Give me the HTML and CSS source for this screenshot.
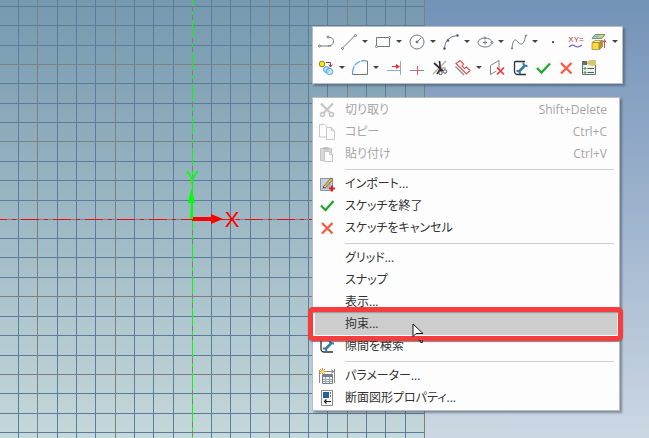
FILE: index.html
```html
<!DOCTYPE html>
<html lang="ja">
<head>
<meta charset="utf-8">
<title>スケッチ</title>
<link rel="stylesheet" href="styles.css">
</head>
<body>
<main class="workspace">
  <svg class="sketch" aria-hidden="true">
    <defs>
      <linearGradient id="sheet" x1="0" y1="0" x2="0" y2="1">
        <stop offset="0" stop-color="#7599af"/>
        <stop offset="1" stop-color="#c5d8da"/>
      </linearGradient>
    </defs>
    <rect width="424" height="100%" fill="url(#sheet)"/>
    <path class="minor" d="M18.5 0V2000M57.5 0V2000M76.5 0V2000M95.5 0V2000M134.5 0V2000M153.5 0V2000M173.5 0V2000M211.5 0V2000M230.5 0V2000M250.5 0V2000M289.5 0V2000M308.5 0V2000M327.5 0V2000M366.5 0V2000M385.5 0V2000M405.5 0V2000M0 6.500H424M0 25.500H424M0 45.500H424M0 83.500H424M0 103.500H424M0 122.500H424M0 161.500H424M0 180.500H424M0 200.500H424M0 238.500H424M0 257.500H424M0 277.500H424M0 316.500H424M0 335.500H424M0 355.500H424M0 393.500H424M0 413.500H424M0 432.500H424"/>
    <path class="major" d="M37.500 0V2000M115.500 0V2000M192.500 0V2000M269.500 0V2000M347.500 0V2000M424.500 0V2000M0 64.500H424M0 141.500H424M0 219.500H424M0 296.500H424M0 374.500H424"/>
    <path class="axis-x" d="M0 219.500H424"/>
    <path class="axis-y" d="M192.500 0V2000"/>
    <path class="arrow-x" d="M192 217h19v-3l12 5-12 5v-3h-19z"/>
    <path class="arrow-y" d="M190 219l1-16h-3l3.500-15 3.500 15h-2v16z"/>
    <text class="label-x" x="232" y="227">X</text>
    <text class="label-y" x="192" y="185">Y</text>
  </svg>

  <div class="popups">
    <div class="palette" role="toolbar" aria-label="スケッチツール">
      <div class="tools">
        <button aria-label="ポリライン"><svg class="line"><path d="M4 17H16M13 8.500C17 8 19 10.500 18.500 13S16 17 13 17"/><circle cx="4.500" cy="17" r="1"/><circle cx="13" cy="8" r="1"/></svg></button>
        <button aria-label="直線"><svg class="line"><path d="M5 18.500L16.500 7"/><circle cx="4.500" cy="19.500" r="1"/><circle cx="17.500" cy="6.500" r="1"/></svg></button>
        <button class="drop" aria-label="直線の種類"></button>
        <button aria-label="四角形"><svg class="line"><path d="M4.500 8.500H17.500V17.500H4.500z"/><circle cx="4.500" cy="17.500" r="1"/><circle cx="17.500" cy="8.500" r="1"/></svg></button>
        <button class="drop" aria-label="四角形の種類"></button>
        <button aria-label="円"><svg class="line"><circle class="hollow" cx="11" cy="13" r="7"/><path d="M11 13l4-4"/><circle class="dark" cx="11" cy="13" r="1"/></svg></button>
        <button class="drop" aria-label="円の種類"></button>
        <button aria-label="円弧"><svg class="line"><path d="M4.500 19Q5 8 17 6.500"/><circle class="dark" cx="4.500" cy="19.500" r="1"/><circle class="dark" cx="8" cy="11.500" r="1"/><circle class="dark" cx="17.500" cy="6.500" r="1"/></svg></button>
        <button class="drop" aria-label="円弧の種類"></button>
        <button aria-label="楕円"><svg class="line"><ellipse cx="11" cy="13.500" rx="7" ry="4.500"/><path d="M9 13.500h4M11 11.500v4"/><circle cx="11" cy="9" r="1"/><circle cx="18" cy="13.500" r="1"/></svg></button>
        <button class="drop" aria-label="楕円の種類"></button>
        <button aria-label="スプライン"><svg class="line"><path d="M4 19C5 9 8 10 10 13S16 17 17.500 7"/><circle class="dark" cx="4" cy="19.500" r=".6"/><circle class="dark" cx="18" cy="6.500" r=".6"/></svg></button>
        <button class="drop" aria-label="スプラインの種類"></button>
        <button aria-label="点"><svg><path d="M10 12h2v2h-2z" fill="#555b66"/></svg></button>
        <button aria-label="数式曲線"><svg><text class="formula" x="11" y="13">XY=</text><path d="M4 18q3-3 6-1t7-1" fill="none" stroke="#756bd6" stroke-width="1.300"/></svg></button>
        <button aria-label="投影"><svg><path d="M7 5.500h10l-3 4H4z" fill="#c5d66f" stroke="#77918c"/><path d="M7 6.500h5l-2 2H6z" fill="#84b9d1"/><path d="M4 13.500l3-2h7l-3 2z" fill="#fff08b" stroke="#8f8137" stroke-width=".7"/><path d="M4 13.500h7v7H4z" fill="#ffd83b" stroke="#8f8137" stroke-width=".7"/><path d="M11.500 13.500l3-2v6l-3 3z" fill="#b8912d" stroke="#8f8137" stroke-width=".7"/><path d="M16.500 19v-7M15 13.500l1.500-3 1.500 3" fill="none" stroke="#b95960"/></svg></button>
        <button class="drop" aria-label="投影の種類"></button>
      </div>
      <div class="tools">
        <button aria-label="変換"><svg><circle cx="7" cy="9" r="2.800" fill="#ffe600" stroke="#8b8436"/><path d="M11 7.500h4.500v4M14 9.500l1.500 2.500 2-2.500" fill="none" stroke="#9a3942"/><circle cx="11.500" cy="14.500" r="3" fill="#b6def6" stroke="#54a2d5"/><circle cx="14.500" cy="16.500" r="3.200" fill="#b6def6" fill-opacity=".7" stroke="#54a2d5"/></svg></button>
        <button class="drop" aria-label="変換の種類"></button>
        <button aria-label="フィレット"><svg class="line"><path d="M3.500 16v3.500h15V6H16"/><path d="M3.500 18Q4 6 16 5.500" stroke="#58adf0" stroke-width="1.300" stroke-dasharray="7 1"/></svg></button>
        <button class="drop" aria-label="フィレットの種類"></button>
        <button aria-label="延長"><svg><path d="M4 15.500h13M17.500 6v14" fill="none" stroke="#8eaad5"/><path d="M9 11.500h5" stroke="#f0302e"/><path d="M13 9l4 2.500-4 2.500z" fill="#f0302e"/></svg></button>
        <button aria-label="分割"><svg><path d="M4 15.500h5M13 15.500h5" stroke="#6597b4"/><path d="M11.500 11v9M9 15.500h5" stroke="#f35c59"/></svg></button>
        <button aria-label="トリム"><svg fill="none"><path d="M4 19L17 6" stroke="#c0aca3" stroke-width="1.500"/><path d="M5 8l9 8M8 19l4-6M10.500 6l1 10" stroke="#302f38" stroke-width="1.700"/><path d="M12 13l5 0" stroke="#85807f"/><circle cx="11.500" cy="18" r="1.700" stroke="#55545c"/><circle cx="16" cy="16.500" r="1.700" stroke="#55545c"/></svg></button>
        <button aria-label="オフセット"><svg fill="none"><path d="M3.500 11.500L12 20" stroke="#888" stroke-width="1.300"/><path d="M4 8.500l4-3 3.500 3.500-1.500 2 2.500 2.500 2-1.500 3.500 3.500-3.500 3.500z" stroke="#e4504e" stroke-width="1.200"/></svg></button>
        <button class="drop" aria-label="オフセットの種類"></button>
        <button aria-label="面を削除"><svg fill="none"><path d="M4.500 19.500V10.500l8.500-5v9M4.500 19.500l6-3.500" stroke="#858585"/><path d="M11 12.500l7 7M18 12.500l-7 7" stroke="#ef3635" stroke-width="1.700"/></svg></button>
        <button aria-label="隙間を検索"><svg fill="none"><path d="M16 6.500H6.500Q5.500 6.500 5.500 8v8q0 3.500 3.500 3.500h8" stroke="#2e3338" stroke-width="1.300"/><path d="M10 16.500l5.500-5.500" stroke="#397aa5" stroke-width="2.600"/><path d="M14.500 7.500q-1 3.500 4 3.500M7.500 16q3.500-.5 3.500 3" stroke="#397aa5" stroke-width="2"/></svg></button>
        <button aria-label="スケッチを終了"><svg fill="none"><path d="M5 13l4.500 4.500 8.500-9" stroke="#23a82b" stroke-width="2.300"/></svg></button>
        <button aria-label="スケッチをキャンセル"><svg fill="none"><path d="M6 8l10.500 10.500M16.500 8L6 18.500" stroke="#fa5a42" stroke-width="2.300"/></svg></button>
        <button aria-label="プロパティ"><svg><path d="M4.500 8.500h13v11h-13z" fill="#edf3ee" stroke="#657168"/><path d="M4 6h5v4H4z" fill="#65716a"/><path d="M9 7l3-2h6v5l-4 1-5-2z" fill="#d6c76e"/><path d="M9.500 13.500H16M9.500 17.500H16" stroke="#535e57"/><path d="M6 13h2v1H6zM6 17h2v1H6z" fill="none" stroke="#3a9a45"/></svg></button>
      </div>
    </div>

    <div class="menu" role="menu" aria-label="スケッチメニュー">
      <button class="item" role="menuitem" disabled>
        <svg fill="none" stroke="#c5c5c5"><path d="M6 4.500l9.500 9.500M18 4.500L8.500 14" stroke-width="2.200"/><circle cx="7.500" cy="15.500" r="2"  stroke-width="1.500"/><circle cx="16.500" cy="15.500" r="2" stroke-width="1.500"/></svg>
        <span>切り取り</span><kbd>Shift+Delete</kbd></button>
      <button class="item" role="menuitem" disabled>
        <svg fill="#fdfdfd" stroke="#c9c9c9"><path d="M4.500 3.500h5l3 3v9.500h-8z"/><path d="M11.500 6.500h5l3 3v9h-8z"/><path d="M16.500 6.500v3h3" fill="none"/></svg>
        <span>コピー</span><kbd>Ctrl+C</kbd></button>
      <button class="item" role="menuitem" disabled>
        <svg fill="#fdfdfd" stroke="#c5c5c5"><path d="M5.500 5.500h11v12h-11z" fill="#d9d9d9"/><path d="M8.500 4.500h5v2h-5z" fill="#bbb"/><path d="M9.500 8.500h5l3 3v7h-8z"/><path d="M14.500 8.500v3h3" fill="none"/></svg>
        <span>貼り付け</span><kbd>Ctrl+V</kbd></button>
      <hr>
      <button class="item" role="menuitem">
        <svg><path d="M5.500 5.500h12v12h-12z" fill="#c7d2e0" stroke="#8793a5"/><path d="M6 16L16 6v10z" fill="#a9b8cb"/><path d="M8 14L16 5l2 1.500L10 15z" fill="#e2b94b" stroke="#68563b" stroke-width=".7"/><path d="M7.500 15.500l1-2 1 1z" fill="#333"/><path d="M14 15.500h6M17 12.500v6" stroke="#f01414" stroke-width="2"/></svg>
        <span>インポート...</span></button>
      <button class="item" role="menuitem">
        <svg fill="none"><path d="M6 10.500l4.500 4.500 8-9" stroke="#23a82b" stroke-width="2.300"/></svg>
        <span>スケッチを終了</span></button>
      <button class="item" role="menuitem">
        <svg fill="none"><path d="M7 6l10.500 10.500M17.500 6L7 16.500" stroke="#fa5a42" stroke-width="2.300"/></svg>
        <span>スケッチをキャンセル</span></button>
      <hr>
      <button class="item" role="menuitem"><span>グリッド...</span></button>
      <button class="item" role="menuitem"><span>スナップ</span></button>
      <button class="item" role="menuitem"><span>表示...</span></button>
      <button class="item active" role="menuitem"><span>拘束...</span></button>
      <button class="item" role="menuitem">
        <svg fill="none"><path d="M16 4.500H7.500q-1.500 0-1.500 1.500v7.500q0 3.500 3.500 3.500H18" stroke="#2e3338" stroke-width="1.300"/><path d="M10.500 14l5.500-5.500" stroke="#397aa5" stroke-width="2.600"/><path d="M15 5q-1 3.500 4 3.500M8 13.500q3.500-.5 3.500 3" stroke="#397aa5" stroke-width="2"/></svg>
        <span>隙間を検索</span></button>
      <hr>
      <button class="item" role="menuitem">
        <svg><path d="M4.500 5v13M19.500 4v14M6 6.500h13M16 4.500l3 2-3 2" fill="none" stroke="#8a8a8a"/><path d="M7.500 9.500h10v9h-10z" fill="#eef0f3" stroke="#777f8d"/><path d="M8 10h9v2H8z" fill="#777f8d"/><path d="M8 14.500h9M8 16.500h9M10.500 12v6M14.500 12v6" stroke="#9da4af"/><path d="M7.500 3v7M4 6.500h7M5 4l5 5M10 4L5 9" stroke="#f28a35"/><circle cx="7.500" cy="6.500" r="1.500" fill="#ffe36b"/></svg>
        <span>パラメーター...</span></button>
      <button class="item" role="menuitem">
        <svg><path d="M6.500 3.500h11v15h-11z" fill="#f7f8f9" stroke="#8a8a8a"/><path d="M8 5h6v6H8z" fill="#276092"/><path d="M15.500 5v6" stroke="#777" stroke-dasharray="2 1"/><path d="M10 14.500h6M11.500 12.500l-2 2 2 2" fill="none" stroke="#222" stroke-width="1.200"/></svg>
        <span>断面図形プロパティ...</span></button>

      <div class="callout"></div>
      <svg class="pointer" aria-hidden="true"><path d="M1 1v12.500l3-3h7z" fill="#fff" stroke="#151515"/><path d="M6 17l2 1M8.500 17v2.500h2V17" fill="none" stroke="#333"/></svg>
    </div>
  </div>
</main>
</body>
</html>
```
FILE: styles.css
```css
* {
  box-sizing: border-box;
}

body {
  margin: 0;
  font-family: "Open Sans", "Noto Sans CJK JP", sans-serif;
  font-size: 12px;
  color: #333;
}

.workspace {
  position: relative;
  min-height: 100vh;
  overflow: hidden;
  background: linear-gradient(#7392b8, #ccd8e4);
}

.sketch {
  position: absolute;
  inset: 0;
  width: 100%;
  height: 100%;
}

.sketch path {
  fill: none;
}

.sketch .minor {
  stroke: #5d7b9b;
}

.sketch .major {
  stroke: #7f7f80;
}

.sketch .axis-x {
  stroke: #f00a0a;
  stroke-dasharray: 18 5 4 5;
  stroke-dashoffset: 11;
}

.sketch .axis-y {
  stroke: #0f0;
  stroke-dasharray: 18 5 4 5;
  stroke-dashoffset: 12;
}

.sketch .arrow-x {
  fill: #f00;
}

.sketch .arrow-y {
  fill: #0f0;
}

.sketch text {
  font-family: "Liberation Sans", sans-serif;
  text-anchor: middle;
}

.label-x {
  font-size: 22px;
  fill: #f00;
}

.label-y {
  font-size: 20px;
  fill: #0f0;
}

.popups {
  position: absolute;
  top: 26px;
  left: 312px;
  display: flex;
  flex-direction: column;
  align-items: flex-start;
  gap: 13px;
}

.palette,
.menu {
  background: #fdfdfd;
  border: 1px solid #b9bcc1;
  box-shadow: 2px 2px 2px rgba(60, 70, 85, 0.5);
}

.palette {
  padding: 2px 0 2px 2px;
}

.tools {
  display: flex;
}

button {
  margin: 0;
  padding: 0;
  border: 0;
  background: none;
  font: inherit;
  color: inherit;
}

.tools button {
  width: 23px;
  height: 26px;
}

.tools svg {
  display: block;
  width: 23px;
  height: 26px;
}

.tools .drop {
  display: grid;
  align-items: center;
  justify-items: start;
  width: 11px;
  padding: 0 0 2px 1px;
}

.drop::before {
  content: "";
  border: 3px solid transparent;
  border-top-color: #444;
  border-bottom: 0;
}

.line {
  fill: none;
  stroke: #737980;
}

.line circle,
.line ellipse {
  fill: #fdfdfd;
}

.line .hollow {
  fill: none;
}

.line .dark {
  fill: #4b4f55;
}

.formula {
  font-family: "Liberation Sans", sans-serif;
  font-size: 8px;
  text-anchor: middle;
  fill: #a63c48;
}

.menu {
  position: relative;
  width: 308px;
  padding: 1px 2px;
}

.item {
  display: grid;
  grid-template-columns: 24px 1fr auto;
  column-gap: 6px;
  align-items: center;
  width: 100%;
  height: 22px;
  padding-right: 10px;
  text-align: left;
}

.item svg {
  width: 24px;
  height: 22px;
}

.item span,
.item kbd {
  line-height: 18px;
  white-space: nowrap;
}

.item span {
  grid-column: 2;
  font-feature-settings: "palt";
}

.item kbd {
  font-family: inherit;
  font-size: 12px;
}

.item:disabled {
  color: #a5a5a5;
}

.item.active {
  background: #cdcdcd;
}

.menu hr {
  height: 1px;
  margin: 4px 3px 3px 30px;
  border: 0;
  background: #d0d0d0;
}

.callout {
  position: absolute;
  top: 209px;
  left: -5px;
  right: -4px;
  height: 34px;
  border: 5px solid #f63c3c;
  border-radius: 5px;
  box-shadow: 0 1px 1px rgba(50, 50, 50, 0.6), inset 0 1px 1px rgba(50, 50, 50, 0.5);
}

.pointer {
  position: absolute;
  top: 225px;
  left: 99px;
  width: 14px;
  height: 21px;
}
```
